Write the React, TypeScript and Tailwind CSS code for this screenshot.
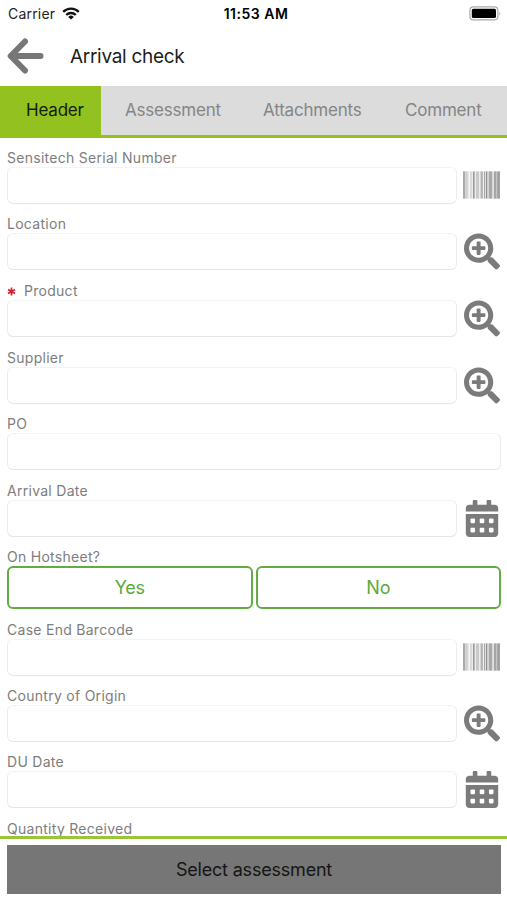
import type { ReactNode } from 'react';
import { FaCalendarAlt, FaSearchPlus } from 'react-icons/fa';

type IconKind = 'barcode' | 'search' | 'calendar' | 'none';

const BARS: [number, number, string][] = [
  [0, 2.5, '#ababab'], [2.5, 2.5, '#cfcfcf'], [5, 1.5, '#e6e6e6'], [7.5, 1.5, '#c8c8c8'],
  [9, 1.3, '#ebebeb'], [10.4, 1.5, '#8c8c8c'], [13, 3.8, '#cacaca'], [16.8, 1.2, '#ececec'],
  [18, 2.4, '#b2b2b2'], [21.4, 1.5, '#a6a6a6'], [23.6, 1.3, '#8f8f8f'], [24.9, 1.5, '#cacaca'],
  [26.6, 3.4, '#a9a9a9'], [30, 1.6, '#d6d6d6'], [32.2, 1.4, '#767676'], [33.6, 1.4, '#c4c4c4'],
  [35, 3, '#a2a2a2'],
];

function Barcode() {
  return (
    <svg className="ml-[6px] mt-[4px] h-[28px] w-[38px]" viewBox="0 0 38 28">
      {BARS.map(([x, w, fill]) => (
        <rect key={x} x={x} y="0" width={w} height="28" fill={fill} />
      ))}
    </svg>
  );
}

function FieldIcon({ kind }: { kind: IconKind }) {
  if (kind === 'barcode') return <Barcode />;
  if (kind === 'search') return <FaSearchPlus className="ml-[7px] size-[37px] text-[#7b7b7b]" />;
  if (kind === 'calendar') return <FaCalendarAlt className="ml-[7px] size-[37px] text-[#7b7b7b]" />;
  return null;
}

function Label({ children, required }: { children: ReactNode; required?: boolean }) {
  return (
    <div className="flex h-[17px] items-start whitespace-nowrap text-[14px] leading-[15px] tracking-[0.28px] text-[#7d7d7d]">
      {required && (
        <svg className="mr-[8px] mt-[4px] size-[9px]" viewBox="0 0 9 9" stroke="#d3202a" strokeWidth="1.7">
          <path d="M4.5 .6v7.8M1 2.5l7 4M8 2.5l-7 4" />
        </svg>
      )}
      {children}
    </div>
  );
}

function Field({ label, kind, tall, required }: { label: string; kind: IconKind; tall?: boolean; required?: boolean }) {
  return (
    <div className={tall ? 'h-[67px]' : 'h-[66px]'}>
      <Label required={required}>{label}</Label>
      <div className="flex h-[37px]">
        <div
          className={`${kind === 'none' ? 'w-[494px]' : 'w-[450px]'} h-[37px] shrink-0 rounded-[6px] border border-b-[#e6e6e6] border-l-[#ececec] border-r-[#ececec] border-t-[#f3f3f3] bg-white`}
        />
        <FieldIcon kind={kind} />
      </div>
    </div>
  );
}

function Choice({ children }: { children: ReactNode }) {
  return (
    <button className="flex h-[43px] flex-1 items-center justify-center rounded-[6px] border-2 border-[#62ad42] text-[18px] tracking-[-0.2px] text-[#58ab38]">
      {children}
    </button>
  );
}

export default function App() {
  return (
    <div className="flex h-[900px] w-[507px] flex-col overflow-hidden bg-white font-['Inter','Liberation_Sans',sans-serif]">
      <header className="h-[86px] shrink-0">
        <div className="grid h-[27px] grid-cols-3 items-center px-[8px] text-[14px] text-[#222]">
          <div className="flex items-center gap-[7px]">
            <span className="tracking-[0.2px]">Carrier</span>
            <svg className="h-[13px] w-[18px]" viewBox="0 0 18 13" fill="none" stroke="#111" strokeWidth="2.3">
              <path d="M1.2 4.9a11 11 0 0 1 15.6 0" />
              <path d="M4.2 8a6.8 6.8 0 0 1 9.6 0" />
              <path d="M9 12.6 6.2 9.9a4 4 0 0 1 5.6 0z" fill="#111" stroke="none" />
            </svg>
          </div>
          <div className="pl-[5px] text-center font-semibold tracking-[0.5px] text-black">11:53 AM</div>
          <svg className="-mr-[2px] h-[15px] w-[32px] justify-self-end" viewBox="0 0 32 15">
            <rect x=".9" y=".9" width="28" height="13" rx="3.5" fill="#fff" stroke="#aaa" strokeWidth="1.2" />
            <rect x="2.8" y="2.8" width="24.2" height="9.2" rx="1.6" fill="#000" />
            <path d="M30.3 5.5q1.6 2 0 4z" fill="#999" />
          </svg>
        </div>
        <div className="flex h-[58px] items-center pl-[7px]">
          <svg className="h-[36px] w-[37px]" viewBox="0 0 37 36" fill="none" stroke="#777" strokeWidth="6" strokeLinecap="round" strokeLinejoin="round">
            <path d="M18 3.5 3.7 18 18 32.5" />
            <path d="M5 18h28.5" />
          </svg>
          <h1 className="ml-[26px] text-[19px] leading-none tracking-[-0.3px] text-[#1c1c1c]">Arrival check</h1>
        </div>
      </header>

      <nav className="flex h-[52px] shrink-0 border-b-[3px] border-[#93c120] bg-[#dcdcdc] text-[17px] tracking-[-0.2px] text-[#858585]">
        <div className="flex w-[101px] items-center bg-[#93c120] pl-[26px] text-[#15200a]">Header</div>
        <div className="flex w-[138px] items-center pl-[24px]">Assessment</div>
        <div className="flex w-[142px] items-center pl-[24px]">Attachments</div>
        <div className="flex flex-1 items-center pl-[24px]">Comment</div>
      </nav>

      <main className="min-h-0 flex-1 px-[7px] pt-[12px]">
        <Field label="Sensitech Serial Number" kind="barcode" />
        <Field label="Location" kind="search" tall />
        <Field label="Product" kind="search" tall required />
        <Field label="Supplier" kind="search" />
        <Field label="PO" kind="none" tall />
        <Field label="Arrival Date" kind="calendar" />
        <div className="h-[73px]">
          <Label>On Hotsheet?</Label>
          <div className="flex w-[494px] gap-[3px]">
            <Choice>Yes</Choice>
            <Choice>No</Choice>
          </div>
        </div>
        <Field label="Case End Barcode" kind="barcode" />
        <Field label="Country of Origin" kind="search" />
        <Field label="DU Date" kind="calendar" tall />
        <Label>Quantity Received</Label>
      </main>

      <footer className="h-[64px] shrink-0 border-t-[3px] border-[#9ac53a] bg-white px-[7px] pt-[6px]">
        <button className="flex h-[49px] w-[494px] items-center justify-center bg-[#767676] text-[18px] tracking-[-0.2px] text-[#151515]">
          Select assessment
        </button>
      </footer>
    </div>
  );
}
